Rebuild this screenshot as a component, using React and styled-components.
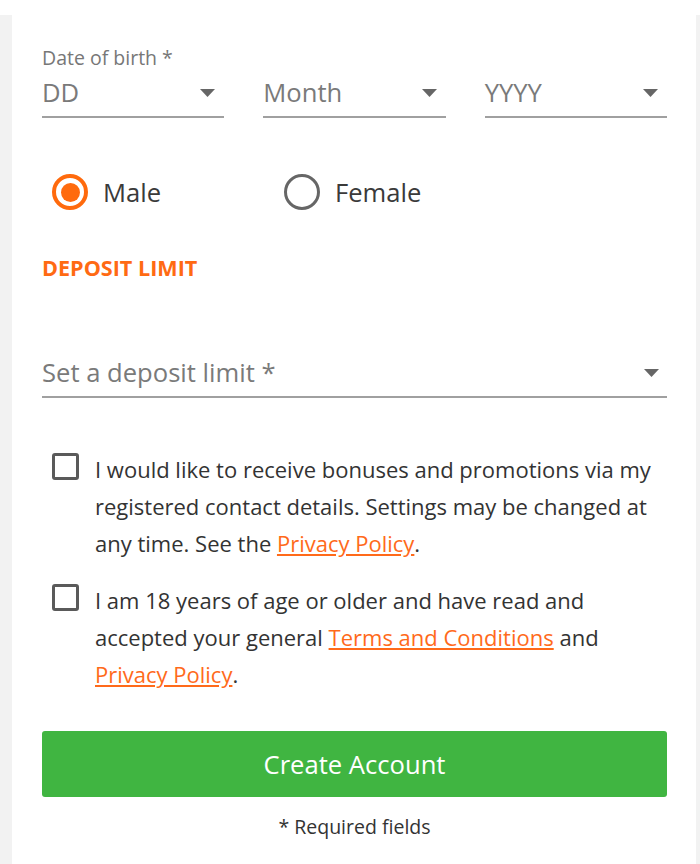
import React from 'react';
import styled, { createGlobalStyle } from 'styled-components';

const GlobalStyle = createGlobalStyle`
  body {
    margin: 0;
    background: #fff;
    font-family: "Open Sans", "Liberation Sans", sans-serif;
  }
`;

const Page = () => {
  return (
    <>
      <GlobalStyle />
      <Frame>
        <Panel>
          <Label>Date of birth *</Label>
          <DateRow>
            <Select>DD<Caret /></Select>
            <Select>Month<Caret /></Select>
            <Select>YYYY<Caret /></Select>
          </DateRow>

          <RadioGroup>
            <Option>
              <RadioCircle checked />
              Male
            </Option>
            <Option>
              <RadioCircle />
              Female
            </Option>
          </RadioGroup>

          <SectionTitle>DEPOSIT LIMIT</SectionTitle>

          <Select wide>Set a deposit limit *<Caret /></Select>

          <CheckRow>
            <Box />
            <CheckText>
              I would like to receive bonuses and promotions via my registered contact details.
              Settings may be changed at any time. See the <Link href="#">Privacy Policy</Link>.
            </CheckText>
          </CheckRow>
          <CheckRow second>
            <Box />
            <CheckText>
              I am 18 years of age or older and have read and accepted your general{' '}
              <Link href="#">Terms and Conditions</Link> and <Link href="#">Privacy Policy</Link>.
            </CheckText>
          </CheckRow>

          <SubmitButton>Create Account</SubmitButton>
          <Required>* Required fields</Required>
        </Panel>
      </Frame>
    </>
  );
};

const Caret = () => (
  <svg width="15" height="8" viewBox="0 0 15 8">
    <path d="M0 0 L15 0 L7.5 8 Z" fill="#666" />
  </svg>
);

export default Page;

// Styled Components
const Frame = styled.div`
  margin-top: 15px;
  background: #f2f2f2;
  padding: 0 4px 0 12px;
`;

const Panel = styled.div`
  background: #fff;
  height: 849px;
  box-sizing: border-box;
  padding: 33px 29px 0 30px;
`;

const Label = styled.div`
  font-size: 19.5px;
  line-height: 20px;
  color: #777;
  margin-bottom: 8px;
`;

const DateRow = styled.div`
  display: grid;
  grid-template-columns: repeat(3, 1fr);
  gap: 39px;
`;

const Select = styled.div`
  display: flex;
  align-items: center;
  justify-content: space-between;
  font-size: 25.6px;
  line-height: 34px;
  color: #7a7a7a;
  padding: 0 9px 6px 0;
  border-bottom: 2px solid #a0a0a0;
  margin-top: ${props => props.wide ? '75px' : '0'};
  padding-right: ${props => props.wide ? '8px' : '9px'};
`;

const RadioGroup = styled.div`
  display: flex;
  padding-left: 10px;
  margin-top: 56px;
`;

const Option = styled.label`
  display: flex;
  align-items: center;
  gap: 15px;
  width: 232px;
  font-size: 25.6px;
  line-height: 35px;
  color: #3a3a3a;
`;

const RadioCircle = styled.span`
  width: 36px;
  height: 36px;
  box-sizing: border-box;
  border-radius: 50%;
  border: ${props => props.checked ? '4px solid #ff6a0d' : '3px solid #666'};
  display: flex;
  align-items: center;
  justify-content: center;
  &::after {
    content: '';
    display: ${props => props.checked ? 'block' : 'none'};
    width: 19px;
    height: 19px;
    border-radius: 50%;
    background: #ff6a0d;
  }
`;

const SectionTitle = styled.div`
  margin-top: 45px;
  font-size: 21.6px;
  line-height: 26px;
  font-weight: 700;
  color: #ff6a13;
`;

const CheckRow = styled.div`
  display: flex;
  align-items: flex-start;
  margin-top: ${props => props.second ? '19px' : '53px'};
  padding-left: 10px;
`;

const Box = styled.span`
  flex: none;
  width: 27px;
  height: 27px;
  box-sizing: border-box;
  border: 3px solid #5a5a5a;
  border-radius: 3px;
  margin-top: 2px;
  margin-right: 16px;
`;

const CheckText = styled.div`
  font-size: 22px;
  line-height: 37.2px;
  color: #333;
`;

const Link = styled.a`
  color: #ff6a1a;
  text-decoration: underline;
`;

const SubmitButton = styled.button`
  display: block;
  width: 100%;
  height: 66px;
  margin-top: 38px;
  border: none;
  border-radius: 3px;
  background: #40b541;
  color: #fff;
  font-family: inherit;
  font-size: 25.6px;
  cursor: pointer;
`;

const Required = styled.div`
  margin-top: 18px;
  text-align: center;
  font-size: 19.5px;
  line-height: 24px;
  color: #333;
`;
